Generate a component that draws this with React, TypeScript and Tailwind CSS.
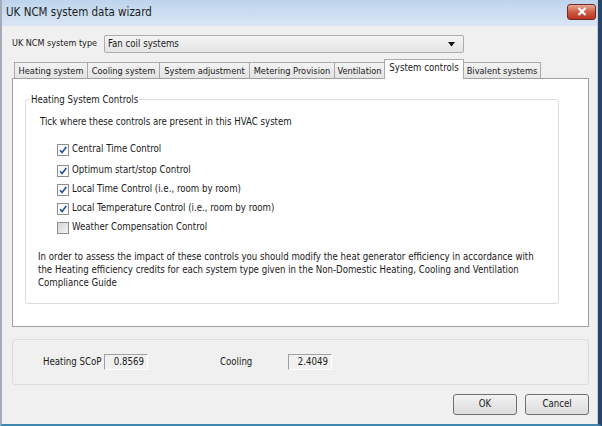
import React from 'react';

type Tab = {
  label: string,
  width: number,
  active?: boolean
};

type Control = {
  label: string,
  checked: boolean
};

const tabs: Tab[] = [
  { label: 'Heating system', width: 74 },
  { label: 'Cooling system', width: 73 },
  { label: 'System adjustment', width: 91 },
  { label: 'Metering Provision', width: 86 },
  { label: 'Ventilation', width: 51 },
  { label: 'System controls', width: 80, active: true },
  { label: 'Bivalent systems', width: 78 },
];

const controls: Control[] = [
  { label: 'Central Time Control', checked: true },
  { label: 'Optimum start/stop Control', checked: true },
  { label: 'Local Time Control (i.e., room by room)', checked: true },
  { label: 'Local Temperature Control (i.e., room by room)', checked: true },
  { label: 'Weather Compensation Control', checked: false },
];

const CheckBox = ({ checked }: { checked: boolean }) => (
  <span
    className={`
      flex items-center justify-center
      w-[12px] h-[12px] shrink-0
      border border-[#8e8f8f]
      ${checked
        ? 'bg-gradient-to-b from-[#f6f7f8] to-[#ffffff]'
        : 'bg-gradient-to-br from-[#d5d5d5] to-[#f4f4f4]'
      }
    `}
  >
    {checked &&
      <svg width="10" height="10" viewBox="0 0 10 10">
        <path
          d="M2 5.2 L4.1 7.6 L8.3 2"
          fill="none"
          stroke="#24508f"
          strokeWidth="1.6"
        />
      </svg>
    }
  </span>
);

const ValueField = ({ value }: { value: string }) => (
  <span
    className="flex items-center justify-end w-[44px] h-[16px] pr-[3px] border-t border-l border-[#a0a0a0] border-r border-b border-r-[#ffffff] border-b-[#ffffff] bg-[#f0f0f0]"
  >
    {value}
  </span>
);

const DialogButton = ({ text }: { text: string }) => (
  <button
    className="w-[64px] h-[21px] rounded-[3px] border border-[#707070] bg-gradient-to-b from-[#f3f3f3] to-[#dcdcdc] text-[#1a1a1a]"
  >
    {text}
  </button>
);

export default function App() {
  return (
    <div
      className="w-[602px] h-[426px] overflow-hidden flex flex-col bg-[#f0f0f0] border-l-2 border-l-[#a3acb6] border-r-[4px] border-r-[#27446a] border-b-2 border-b-[#3f87ad] font-['DejaVu_Sans',sans-serif] font-stretch-condensed text-[9.6px] text-[#1a1a1a]"
    >
      <div className="flex-1 flex flex-col border-r border-r-[#c5ccd4]">
        {/* title bar */}
        <div
          className="flex items-center justify-between h-[26px] pl-[4px] pr-[1px] bg-gradient-to-b from-[#bed4ed] to-[#dae6f4]"
        >
          <span className="text-[11.5px] text-[#1e1e1e]">UK NCM system data wizard</span>
          <span
            className="flex items-center justify-center w-[29px] h-[16px] -mt-[3px] rounded-[3px] border border-[#6e2c25] bg-gradient-to-b from-[#e6a695] via-[#cf5a44] to-[#b8321f]"
          >
            <svg width="10" height="9" viewBox="0 0 10 9">
              <path
                d="M1.5 1 L8.5 8 M8.5 1 L1.5 8"
                stroke="#ffffff"
                strokeWidth="2.2"
              />
            </svg>
          </span>
        </div>

        <div className="flex flex-col pl-[10px]">
          {/* system type */}
          <div className="flex items-center mt-[9px] h-[18px]">
            <span className="w-[92px] shrink-0 whitespace-nowrap text-[9px]">UK NCM system type</span>
            <div
              className="flex items-center justify-between w-[360px] h-[18px] pl-[3px] pr-[8px] rounded-[2px] border border-[#acacac] bg-gradient-to-b from-[#f4f4f4] to-[#e4e4e4]"
            >
              <span>Fan coil systems</span>
              <svg width="7" height="5" viewBox="0 0 7 5">
                <path d="M0 0 H7 L3.5 4.5 Z" fill="#111111" />
              </svg>
            </div>
          </div>

          {/* tab strip */}
          <div className="flex items-end h-[19px] mt-[6px] pl-[2px] relative z-10">
            {tabs.map((tab) =>
              <div
                key={tab.label}
                style={{ width: tab.width }}
                className={`
                  flex items-center justify-center whitespace-nowrap
                  border border-[#a9a9a9] -mr-px
                  ${tab.active
                    ? 'h-[20px] -mb-px border-b-0 bg-white text-[9.6px] pb-[3px]'
                    : 'h-[16px] border-b-0 bg-gradient-to-b from-[#f3f3f3] to-[#e4e4e4] text-[9.2px]'
                  }
                `}
              >
                {tab.label}
              </div>
            )}
          </div>

          {/* tab pane */}
          <div
            className="w-[577px] h-[249px] border border-[#a0a0a0] bg-white pt-[20px] pl-[12px]"
          >
            <div
              className="relative w-[534px] h-[205px] rounded-[3px] border border-[#dcdcdc] pt-[16px] px-[12px]"
            >
              <span className="absolute -top-[7px] left-[4px] px-[1px] bg-white">
                Heating System Controls
              </span>
              <p className="h-[12px] leading-[12px] pl-[2px]">
                Tick where these controls are present in this HVAC system
              </p>
              <ul className="flex flex-col mt-[12px] pl-[19px]">
                {controls.map((control, index) =>
                  <li
                    key={control.label}
                    className={`flex items-center gap-[3px] h-[19px] ${index === 0 ? 'mb-[2px]' : ''}`}
                  >
                    <CheckBox checked={control.checked} />
                    <span>{control.label}</span>
                  </li>
                )}
              </ul>
              <p className="mt-[13px] leading-[13px] w-[496px]">
                In order to assess the impact of these controls you should modify the heat generator efficiency in accordance with the Heating efficiency credits for each system type given in the Non-Domestic Heating, Cooling and Ventilation Compliance Guide
              </p>
            </div>
          </div>

          {/* results */}
          <div
            className="flex items-center w-[577px] h-[46px] mt-[12px] rounded-[3px] border border-[#dddddd] pl-[30px]"
          >
            <span className="w-[61px] whitespace-nowrap">Heating SCoP</span>
            <ValueField value="0.8569" />
            <span className="ml-[72px] w-[68px]">Cooling</span>
            <ValueField value="2.4049" />
          </div>

          {/* buttons */}
          <div className="flex justify-end gap-[8px] w-[577px] mt-[9px]">
            <DialogButton text="OK" />
            <DialogButton text="Cancel" />
          </div>
        </div>
      </div>
    </div>
  );
}
